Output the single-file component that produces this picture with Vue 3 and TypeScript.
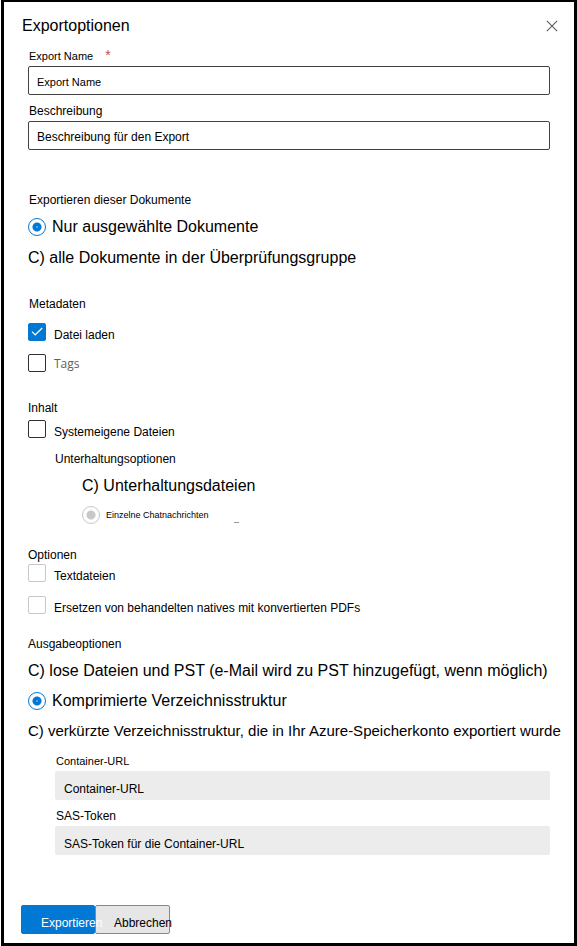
<script setup lang="ts">
import { ref } from 'vue'

const exportName = ref('')
const description = ref('')
const containerUrl = ref('')
const sasToken = ref('')
const documents = ref('selected')
const conversation = ref('messages')
const output = ref('condensed')
const loadFile = ref(true)
const tags = ref(false)
const natives = ref(false)
const textFiles = ref(false)
const redacted = ref(false)
</script>

<template>
  <div class="frame">
    <form class="panel" @submit.prevent>
      <header class="head">
        <h1>Exportoptionen</h1>
        <button type="button" class="close" aria-label="Schließen">
          <svg width="12" height="12" viewBox="0 0 12 12" fill="none" stroke="#605e5c" stroke-width="1.1">
            <path d="M.8.8l10.4 10.4M11.2.8L.8 11.2" />
          </svg>
        </button>
      </header>

      <div class="field">
        <label class="small" for="name">Export Name<span class="required">*</span></label>
        <input id="name" v-model="exportName" class="small" type="text" placeholder="Export Name" />
      </div>
      <div class="field">
        <label for="description">Beschreibung</label>
        <input id="description" v-model="description" type="text" placeholder="Beschreibung für den Export" />
      </div>

      <fieldset class="documents">
        <legend>Exportieren dieser Dokumente</legend>
        <label class="choice">
          <input v-model="documents" type="radio" name="documents" value="selected" />
          <span>Nur ausgewählte Dokumente</span>
        </label>
        <label class="choice plain">
          <input v-model="documents" type="radio" name="documents" value="all" />
          <span>C) alle Dokumente in der Überprüfungsgruppe</span>
        </label>
      </fieldset>

      <fieldset class="metadata">
        <legend>Metadaten</legend>
        <label class="check">
          <span class="box">
            <input v-model="loadFile" type="checkbox" />
            <svg v-if="loadFile" width="18" height="18" viewBox="0 0 18 18" fill="none" stroke="#fff" stroke-width="1.2">
              <path d="M4 8.6l3.2 3.2L14.2 5" />
            </svg>
          </span>
          <span class="text">Datei laden</span>
        </label>
        <label class="check">
          <span class="box"><input v-model="tags" type="checkbox" /></span>
          <span class="tags">Tags</span>
        </label>
      </fieldset>

      <fieldset class="content">
        <legend>Inhalt</legend>
        <label class="check">
          <span class="box"><input v-model="natives" type="checkbox" /></span>
          <span class="text">Systemeigene Dateien</span>
        </label>
        <fieldset class="nested">
          <legend>Unterhaltungsoptionen</legend>
          <div class="deep">
            <label class="choice plain">
              <input v-model="conversation" type="radio" name="conversation" value="files" disabled />
              <span>C) Unterhaltungsdateien</span>
            </label>
            <label class="choice tiny">
              <input v-model="conversation" type="radio" name="conversation" value="messages" disabled />
              <span>Einzelne Chatnachrichten</span>
              <i class="dash"></i>
            </label>
          </div>
        </fieldset>
      </fieldset>

      <fieldset class="options">
        <legend>Optionen</legend>
        <label class="check">
          <span class="box"><input v-model="textFiles" type="checkbox" disabled /></span>
          <span class="text">Textdateien</span>
        </label>
        <label class="check">
          <span class="box"><input v-model="redacted" type="checkbox" disabled /></span>
          <span class="text">Ersetzen von behandelten natives mit konvertierten PDFs</span>
        </label>
      </fieldset>

      <fieldset class="output">
        <legend>Ausgabeoptionen</legend>
        <label class="choice plain">
          <input v-model="output" type="radio" name="output" value="loose" />
          <span>C) lose Dateien und PST (e-Mail wird zu PST hinzugefügt, wenn möglich)</span>
        </label>
        <label class="choice">
          <input v-model="output" type="radio" name="output" value="condensed" />
          <span>Komprimierte Verzeichnisstruktur</span>
        </label>
        <label class="choice plain azure">
          <input v-model="output" type="radio" name="output" value="azure" />
          <span>C) verkürzte Verzeichnisstruktur, die in Ihr Azure-Speicherkonto exportiert wurde</span>
        </label>
      </fieldset>

      <div class="storage">
        <div class="field">
          <label class="small" for="container">Container-URL</label>
          <input id="container" v-model="containerUrl" type="text" placeholder="Container-URL" disabled />
        </div>
        <div class="field">
          <label for="sas">SAS-Token</label>
          <input id="sas" v-model="sasToken" type="text" placeholder="SAS-Token für die Container-URL" disabled />
        </div>
      </div>

      <footer class="actions">
        <button type="submit" class="primary">Exportieren</button>
        <button type="button" class="secondary">Abbrechen</button>
      </footer>
    </form>
  </div>
</template>

<style>
body {
  margin: 0;
  background: #fff;
}
</style>

<style scoped>
.frame {
  padding-left: 1px;
}
.panel {
  box-sizing: border-box;
  min-height: 100vh;
  border: 3px solid #000;
  border-top-width: 2px;
  padding: 12px 24px 9px;
  font: 12px/16px "Liberation Sans", Arial, sans-serif;
  color: #000;
}
.head {
  display: flex;
  justify-content: space-between;
  align-items: center;
  height: 24px;
  margin: 0 -9px 10px -6px;
}
h1 {
  margin: 0;
  font-size: 16px;
  font-weight: 400;
}
button {
  font: inherit;
  cursor: pointer;
}
.close {
  display: flex;
  padding: 0;
  margin-right: 1px;
  border: 0;
  background: none;
}
.field {
  display: flex;
  flex-direction: column;
  gap: 2px;
  margin-bottom: 8px;
}
.field label {
  padding-left: 1px;
}
.small {
  font-size: 11px;
}
.required {
  margin-left: 12px;
  font-size: 14px;
  line-height: 12px;
  color: #c0504d;
}
.field input {
  box-sizing: border-box;
  width: 100%;
  height: 29px;
  margin: 0;
  padding: 3px 8px 0;
  border: 1px solid #424242;
  border-radius: 2px;
  background: #fff;
  font-family: inherit;
  font-size: 12px;
  color: #000;
}
.field input.small {
  font-size: 11px;
}
.field input::placeholder {
  color: #000;
  opacity: 1;
}
.field input:disabled {
  padding-top: 6px;
  border-color: #ececec;
  background: #ececec;
}
fieldset {
  min-width: 0;
  margin: 0;
  padding: 0;
  border: 0;
}
legend {
  display: block;
  padding: 0;
}
.documents {
  margin-top: 42px;
}
.documents legend,
.metadata legend {
  padding-left: 1px;
}
.documents legend {
  margin-bottom: 3px;
}
.choice {
  display: flex;
  align-items: center;
  gap: 6px;
  height: 31px;
  font-size: 16px;
  white-space: nowrap;
}
.choice input {
  appearance: none;
  flex: none;
  width: 18px;
  height: 18px;
  margin: 0;
  border: 1px solid #0078d4;
  border-radius: 50%;
  background: radial-gradient(circle, #fff 0, #0078d4 1px 4px, #fff 5px);
}
.choice input:disabled {
  border-color: #c8c8c8;
  background: radial-gradient(circle, #c8c8c8 0 4px, #fff 5px);
}
.choice.plain {
  position: relative;
}
.choice.plain input {
  position: absolute;
  opacity: 0;
}
.metadata {
  margin-top: 23px;
}
.metadata legend {
  margin-bottom: 4px;
}
.check {
  display: flex;
  align-items: center;
  gap: 8px;
  height: 31px;
}
.box {
  position: relative;
  display: flex;
  flex: none;
}
.box input {
  appearance: none;
  box-sizing: border-box;
  width: 18px;
  height: 18px;
  margin: 0;
  border: 1px solid #323130;
  border-radius: 2px;
  background: #fff;
}
.box input:checked {
  border-color: #0078d4;
  background: #0078d4;
}
.box input:disabled {
  border-color: #c8c8c8;
}
.box svg {
  position: absolute;
  inset: 0;
  pointer-events: none;
}
.text {
  padding-top: 6px;
}
.tags {
  padding-top: 2px;
  font-family: "Open Sans", "Noto Sans", sans-serif;
  color: #605e5c;
}
.content {
  margin-top: 22px;
}
.content .check {
  height: 26px;
}
.nested {
  margin: 9px 0 0 27px;
}
.deep {
  padding: 3px 0 0 27px;
}
.choice.tiny {
  height: 28px;
  font-size: 9px;
}
.dash {
  width: 5px;
  height: 1px;
  margin: 14px 0 0 19px;
  background: #999;
}
.options {
  margin-top: 18px;
}
.options .check {
  height: 20px;
}
.options .check + .check {
  margin-top: 12px;
}
.output {
  margin-top: 21px;
}
.output legend {
  margin-bottom: 4px;
}
.output .choice {
  height: 30px;
}
.output .azure {
  font-size: 15px;
}
.storage {
  margin: 7px 0 0 27px;
}
.actions {
  display: flex;
  margin: 50px 0 0 -7px;
}
.actions button {
  box-sizing: border-box;
  width: 75px;
  height: 29px;
  padding: 7px 0 0 18px;
  border: 1px solid #8a8886;
  border-radius: 2px;
  background: #e6e6e6;
  color: #000;
  text-align: left;
  white-space: nowrap;
}
.actions .primary {
  position: relative;
  width: 74px;
  padding-left: 19px;
  border-color: #0078d4;
  background: #0078d4;
  color: #fff;
}
</style>
